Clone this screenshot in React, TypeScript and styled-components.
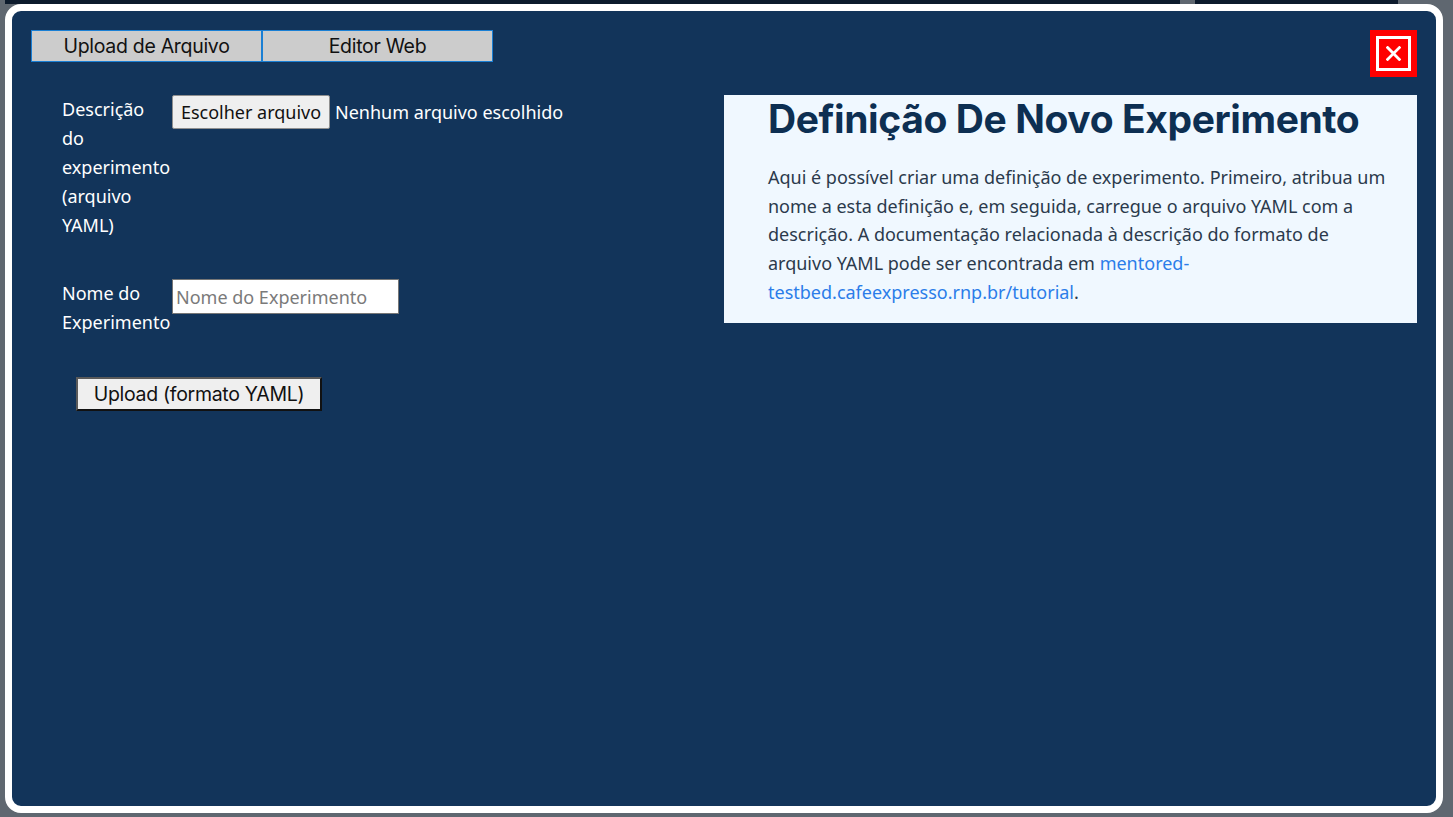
import React from "react";
import styled, { createGlobalStyle } from "styled-components";

const Global = createGlobalStyle`
  html, body { margin: 0; padding: 0; }
  body {
    width: 1453px;
    height: 817px;
    overflow: hidden;
    background-color: #5f6770;
    background-image: linear-gradient(to right, #5f6770 0 5px, #0c1a2c 5px 1180px, #5f6770 1180px 1195px, #0c1a2c 1195px 1398px, #5f6770 1398px);
    background-size: 100% 4px;
    background-repeat: no-repeat;
    font-family: "Noto Sans", Roboto, sans-serif;
  }
  * { box-sizing: border-box; }
`;

const Modal = styled.div`
  margin: 4px 0 0 5px;
  width: 1438px;
  height: 809px;
  border: 7px solid #ffffff;
  border-radius: 16px;
  background: #12345a;
  padding: 19px;
  display: flex;
  flex-direction: column;
`;

const Header = styled.div`
  display: flex;
  justify-content: space-between;
  align-items: flex-start;
`;

const Tabs = styled.div`
  display: flex;
`;

const Tab = styled.button`
  width: 231px;
  height: 32px;
  padding: 0;
  background: #cccccc;
  border: 1px solid #1a7fd4;
  color: #111;
  font-family: Inter, Lato, sans-serif;
  font-size: 19.5px;
  letter-spacing: -0.3px;
  cursor: pointer;
`;

const CloseButton = styled.button`
  width: 47px;
  height: 47px;
  padding: 6px;
  border: none;
  background: #ff0000;
  cursor: pointer;
  display: flex;
`;

const CloseBox = styled.span`
  flex: 1;
  border: 3px solid #ffffff;
  display: flex;
  align-items: center;
  justify-content: center;
`;

const Body = styled.div`
  margin-top: 18px;
  display: grid;
  grid-template-columns: 1fr 1fr;
  align-items: start;
`;

const Form = styled.div`
  padding-left: 31px;
  display: flex;
  flex-direction: column;
  align-items: flex-start;
`;

const Row = styled.div<{ $gap: number }>`
  display: flex;
  align-items: flex-start;
  margin-bottom: ${(p) => p.$gap}px;
`;

const Label = styled.label`
  width: 110px;
  padding-right: 5px;
  flex: none;
  color: #ffffff;
  font-size: 18px;
  line-height: 29px;
`;

const FileButton = styled.button`
  width: 158px;
  height: 34px;
  padding: 0;
  background: #efefef;
  border: 1px solid #8f8f8f;
  border-radius: 2px;
  color: #111;
  font-family: "Noto Sans", Roboto, sans-serif;
  font-size: 18px;
  cursor: pointer;
`;

const FileStatus = styled.span`
  margin-left: 5px;
  color: #ffffff;
  font-size: 18px;
  line-height: 34px;
  white-space: nowrap;
`;

const TextInput = styled.input`
  width: 227px;
  height: 35px;
  padding: 0 3px;
  background: #ffffff;
  border: 1px solid #767676;
  font-family: "Noto Sans", Roboto, sans-serif;
  font-size: 18px;
  color: #111;
  &::placeholder { color: #7a7a7a; }
`;

const UploadButton = styled.button`
  margin-left: 14px;
  width: 246px;
  height: 34px;
  padding: 0;
  background: #efefef;
  border: 2px solid;
  border-color: #5a5a5a #111 #111 #5a5a5a;
  color: #111;
  font-family: Inter, Lato, sans-serif;
  font-size: 19.5px;
  letter-spacing: -0.3px;
  cursor: pointer;
`;

const InfoCard = styled.section`
  background: #f0f8ff;
  padding: 0 26px 16px 44px;
`;

const Title = styled.h1`
  margin: 0;
  color: #0d2f52;
  font-family: Inter, Lato, sans-serif;
  font-weight: 700;
  font-size: 39px;
  line-height: 48px;
  letter-spacing: -0.4px;
`;

const Text = styled.p`
  margin: 20px 0 0;
  color: #2b3a4c;
  font-size: 18px;
  line-height: 28.7px;
`;

const Link = styled.a`
  color: #2b7de9;
  text-decoration: none;
`;

export default function App() {
  return (
    <>
      <Global />
      <Modal>
        <Header>
          <Tabs>
            <Tab>Upload de Arquivo</Tab>
            <Tab>Editor Web</Tab>
          </Tabs>
          <CloseButton aria-label="Fechar">
            <CloseBox>
              <svg width="15" height="15" viewBox="0 0 14 14">
                <path d="M1.5 1.5 L12.5 12.5 M12.5 1.5 L1.5 12.5" stroke="#fff" strokeWidth="2.6" strokeLinecap="square" />
              </svg>
            </CloseBox>
          </CloseButton>
        </Header>
        <Body>
          <Form>
            <Row $gap={39}>
              <Label>Descrição do experimento (arquivo YAML)</Label>
              <FileButton>Escolher arquivo</FileButton>
              <FileStatus>Nenhum arquivo escolhido</FileStatus>
            </Row>
            <Row $gap={40}>
              <Label>Nome do Experimento</Label>
              <TextInput placeholder="Nome do Experimento" />
            </Row>
            <UploadButton>Upload (formato YAML)</UploadButton>
          </Form>
          <InfoCard>
            <Title>Definição De Novo Experimento</Title>
            <Text>
              Aqui é possível criar uma definição de experimento. Primeiro, atribua um nome a esta
              definição e, em seguida, carregue o arquivo YAML com a descrição. A documentação
              relacionada à descrição do formato de arquivo YAML pode ser encontrada em{" "}
              <Link href="#">mentored-testbed.cafeexpresso.rnp.br/tutorial</Link>.
            </Text>
          </InfoCard>
        </Body>
      </Modal>
    </>
  );
}
